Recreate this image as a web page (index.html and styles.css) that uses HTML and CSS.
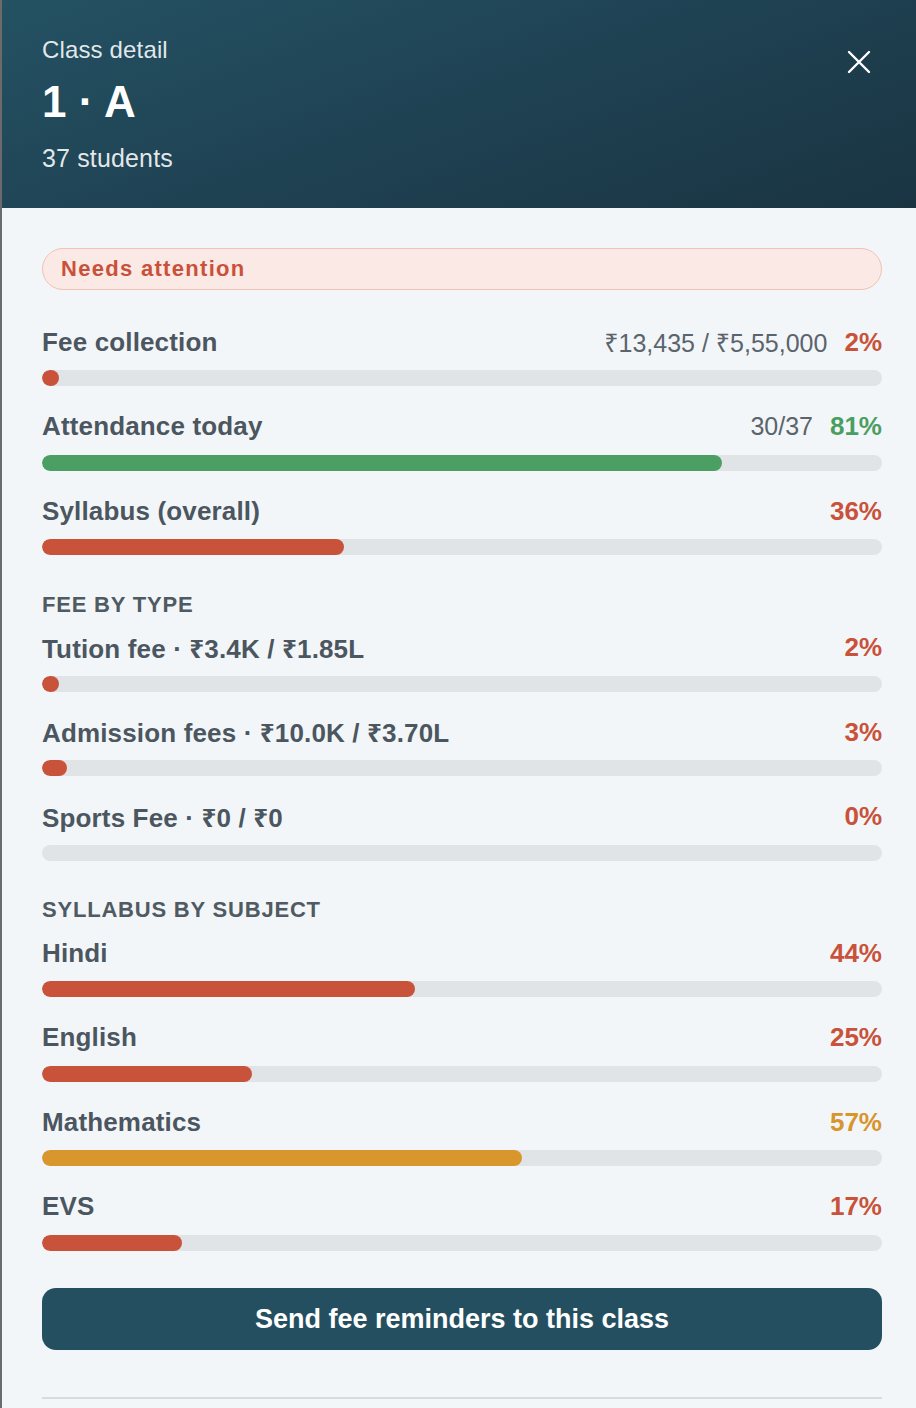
FILE: index.html
```html
<!DOCTYPE html>
<html lang="en">
<head>
    <meta charset="UTF-8">
    <meta name="viewport" content="width=device-width, initial-scale=1.0">
    <title>Class detail</title>
    <link rel="stylesheet" href="styles.css">
</head>
<body>
    <div class="panel">
        <header class="panel-head">
            <div class="head-text">
                <div class="head-kicker">Class detail</div>
                <h1 class="head-title">1 · A</h1>
                <div class="head-sub">37 students</div>
            </div>
            <button class="close-btn" aria-label="Close">
                <svg width="24" height="24" viewBox="0 0 24 24" fill="none" stroke="#fff" stroke-width="2.4" stroke-linecap="round">
                    <path d="M2 2 L22 22 M22 2 L2 22"/>
                </svg>
            </button>
        </header>

        <div class="panel-body">
            <div class="status-pill">Needs attention</div>

            <div class="metric">
                <div class="metric-top">
                    <span class="metric-name">Fee collection</span>
                    <span class="metric-right"><span class="metric-extra">₹13,435 / ₹5,55,000</span><span class="pct red">2%</span></span>
                </div>
                <div class="track"><div class="fill red-bg" style="width: 2%"></div></div>
            </div>

            <div class="metric">
                <div class="metric-top">
                    <span class="metric-name">Attendance today</span>
                    <span class="metric-right"><span class="metric-extra">30/37</span><span class="pct green">81%</span></span>
                </div>
                <div class="track"><div class="fill green-bg" style="width: 81%"></div></div>
            </div>

            <div class="metric">
                <div class="metric-top">
                    <span class="metric-name">Syllabus (overall)</span>
                    <span class="pct red">36%</span>
                </div>
                <div class="track"><div class="fill red-bg" style="width: 36%"></div></div>
            </div>

            <h2 class="section-title">Fee by type</h2>

            <div class="metric">
                <div class="metric-top">
                    <span class="metric-name">Tution fee · ₹3.4K / ₹1.85L</span>
                    <span class="pct red">2%</span>
                </div>
                <div class="track"><div class="fill red-bg" style="width: 2%"></div></div>
            </div>

            <div class="metric">
                <div class="metric-top">
                    <span class="metric-name">Admission fees · ₹10.0K / ₹3.70L</span>
                    <span class="pct red">3%</span>
                </div>
                <div class="track"><div class="fill red-bg" style="width: 3%"></div></div>
            </div>

            <div class="metric">
                <div class="metric-top">
                    <span class="metric-name">Sports Fee · ₹0 / ₹0</span>
                    <span class="pct red">0%</span>
                </div>
                <div class="track"></div>
            </div>

            <h2 class="section-title">Syllabus by subject</h2>

            <div class="metric">
                <div class="metric-top">
                    <span class="metric-name">Hindi</span>
                    <span class="pct red">44%</span>
                </div>
                <div class="track"><div class="fill red-bg" style="width: 44.4%"></div></div>
            </div>

            <div class="metric">
                <div class="metric-top">
                    <span class="metric-name">English</span>
                    <span class="pct red">25%</span>
                </div>
                <div class="track"><div class="fill red-bg" style="width: 25%"></div></div>
            </div>

            <div class="metric">
                <div class="metric-top">
                    <span class="metric-name">Mathematics</span>
                    <span class="pct amber">57%</span>
                </div>
                <div class="track"><div class="fill amber-bg" style="width: 57.1%"></div></div>
            </div>

            <div class="metric">
                <div class="metric-top">
                    <span class="metric-name">EVS</span>
                    <span class="pct red">17%</span>
                </div>
                <div class="track"><div class="fill red-bg" style="width: 16.7%"></div></div>
            </div>

            <button class="primary-btn">Send fee reminders to this class</button>

            <div class="divider"></div>
        </div>
    </div>
</body>
</html>
```

FILE: styles.css
```css
body {
    margin: 0;
    background: #6b6b6b;
    font-family: "Liberation Sans", Arial, "Noto Sans", sans-serif;
    color: #4b5660;
    height: 1408px;
    overflow: hidden;
}
.panel {
    margin-left: 2px;
    background: #f3f6f8;
    min-height: 1408px;
}

/* header */
.panel-head {
    display: flex;
    justify-content: space-between;
    align-items: flex-start;
    height: 208px;
    box-sizing: border-box;
    padding: 36px 37px 0 40px;
    background: linear-gradient(160deg, #245263 0%, #1f4253 50%, #1a3442 100%);
    color: #fff;
}
.head-kicker {
    font-size: 24px;
    line-height: 28px;
    letter-spacing: 0.15px;
    color: rgba(255, 255, 255, 0.88);
}
.head-title {
    margin: 12px 0 0;
    font-size: 44px;
    line-height: 52px;
    font-weight: bold;
}
.head-sub {
    margin-top: 15px;
    font-size: 25px;
    line-height: 30px;
    letter-spacing: 0.15px;
    color: rgba(255, 255, 255, 0.88);
}
.close-btn {
    width: 40px;
    height: 40px;
    margin-top: 6px;
    padding: 0;
    border: none;
    background: none;
    display: flex;
    align-items: center;
    justify-content: center;
    cursor: pointer;
}

/* body */
.panel-body {
    padding: 40px 34px 0 40px;
    display: flex;
    flex-direction: column;
}
.status-pill {
    height: 42px;
    box-sizing: border-box;
    padding: 0 18px;
    display: flex;
    align-items: center;
    border: 1.5px solid #f2c1b5;
    border-radius: 21px;
    background: #fbe9e5;
    color: #c9513a;
    font-size: 22px;
    font-weight: bold;
    letter-spacing: 1.3px;
    margin-bottom: 37px;
}

.metric {
    margin-bottom: 25.5px;
}
.metric-top {
    display: flex;
    justify-content: space-between;
    align-items: center;
    height: 30px;
    margin-bottom: 13px;
}
.metric-name {
    font-size: 26px;
    font-weight: bold;
    letter-spacing: 0.15px;
    color: #4b5660;
}
.metric-right {
    display: flex;
    align-items: center;
    gap: 17px;
}
.metric-extra {
    font-size: 25px;
    color: #5a646c;
}
.pct {
    font-size: 26px;
    font-weight: bold;
}
.red { color: #c9523a; }
.green { color: #4a9e62; }
.amber { color: #d7952c; }

.track {
    height: 16px;
    border-radius: 8px;
    background: #e0e4e7;
    overflow: hidden;
}
.fill {
    height: 100%;
    border-radius: 8px;
}
.red-bg { background: #c8533a; }
.green-bg { background: #4b9f63; }
.amber-bg { background: #d8962d; }

.section-title {
    margin: 11px 0 15px;
    font-size: 22px;
    line-height: 26px;
    font-weight: bold;
    letter-spacing: 0.8px;
    text-transform: uppercase;
    color: #4f5a63;
}

.primary-btn {
    margin-top: 12px;
    height: 62px;
    border: none;
    border-radius: 14px;
    background: #244f60;
    color: #fff;
    font-family: inherit;
    font-size: 27px;
    font-weight: bold;
    cursor: pointer;
}
.divider {
    margin-top: 47px;
    height: 2px;
    background: #d9dcdf;
}
```
